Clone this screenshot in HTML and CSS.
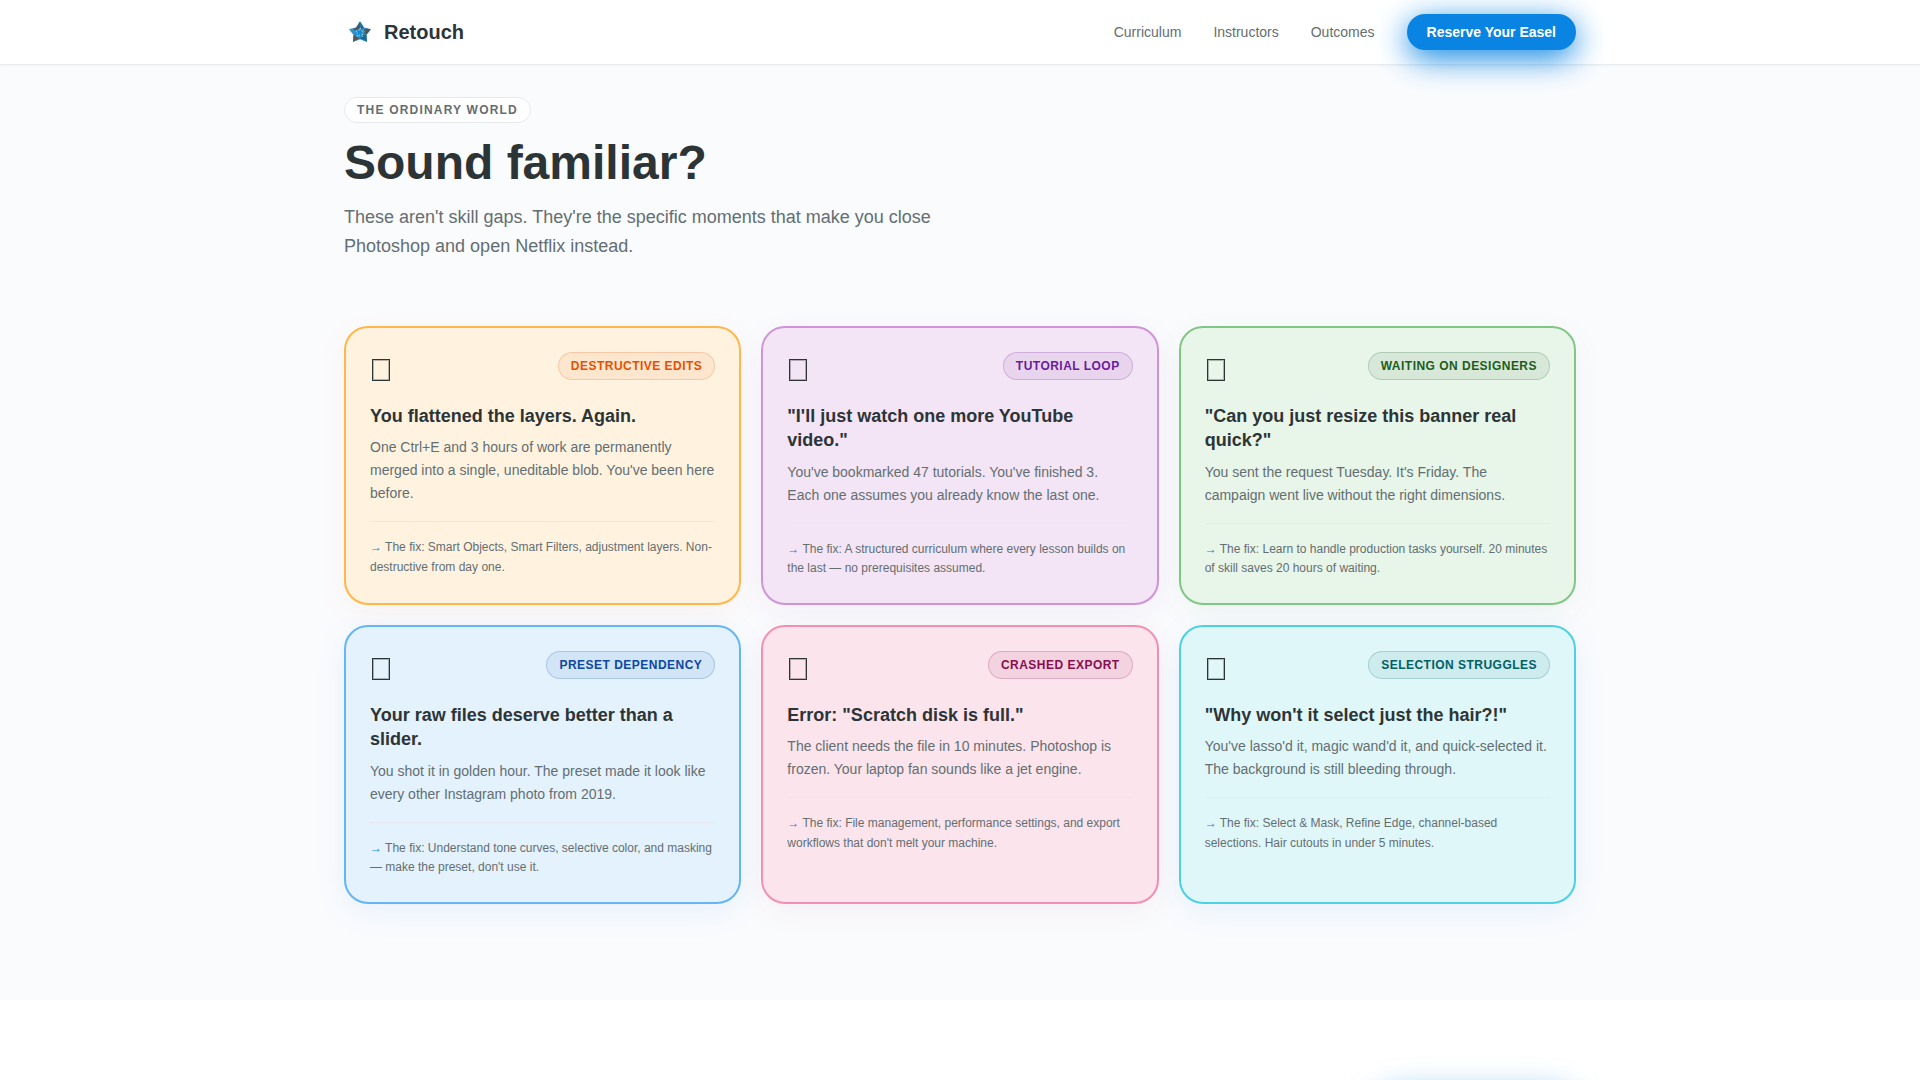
FILE: index.html
```html
<!DOCTYPE html>
<html lang="en">
<head>
<meta charset="UTF-8"><meta name="viewport" content="width=device-width,initial-scale=1">
<title>Retouch</title>
<link rel="stylesheet" href="styles.css">
</head>
<body>
<nav class="nav">
  <div class="container nav-inner">
    <a class="logo" href="#">
      <svg width="32" height="32" viewBox="0 0 32 32">
        <path fill="#2e90c4" stroke="#2e90c4" stroke-width=".6" d="M16 5.800l3.900 6 6.700 1.600-4.300 5.300.4 6.800-6.700-2.400-6.700 2.400.4-6.800-4.300-5.300 6.700-1.600z"/>
        <path fill="#50585e" d="M16 5.500l-3.900 6.300-3 .8 4.400 4.400 2.700-4zM26.600 13.400l-4.300 5.300-3.400-3 3-3.400zM9.100 25.700l.6-7 5.800 3.900z"/>
        <path fill="#1c6a9c" d="M22.900 25.700L16 22.300l3-3.300 3.200-.4zM16 5.500l3.900 6.300-2.900 2z"/>
        <circle cx="16" cy="16.500" r="4" fill="#168bd2"/>
        <path fill="none" stroke="#a8dcf0" stroke-width="1" stroke-dasharray="1.500 1.800" d="M16 12l1.400 2.900 3.200.3-2.400 2.200.7 3.200-2.900-1.700-2.900 1.700.7-3.200-2.400-2.200 3.200-.3z"/>
      </svg>
      Retouch
    </a>
    <div class="nav-links">
      <a href="#curriculum">Curriculum</a>
      <a href="#instructors">Instructors</a>
      <a href="#outcomes">Outcomes</a>
      <a class="btn" href="#reserve">Reserve Your Easel</a>
    </div>
  </div>
</nav>

<section class="problems">
  <div class="container">
    <span class="eyebrow">The Ordinary World</span>
    <h2>Sound familiar?</h2>
    <p class="lead">These aren't skill gaps. They're the specific moments that make you close Photoshop and open Netflix instead.</p>

    <div class="grid">
      <article class="card orange">
        <div class="card-top"><span class="icon"></span><span class="tag">Destructive Edits</span></div>
        <h3>You flattened the layers. Again.</h3>
        <p class="desc">One Ctrl+E and 3 hours of work are permanently merged into a single, uneditable blob. You've been here before.</p>
        <p class="fix"><span>→</span> The fix: Smart Objects, Smart Filters, adjustment layers. Non-destructive from day one.</p>
      </article>
      <article class="card purple">
        <div class="card-top"><span class="icon"></span><span class="tag">Tutorial Loop</span></div>
        <h3>"I'll just watch one more YouTube video."</h3>
        <p class="desc">You've bookmarked 47 tutorials. You've finished 3. Each one assumes you already know the last one.</p>
        <p class="fix"><span>→</span> The fix: A structured curriculum where every lesson builds on the last — no prerequisites assumed.</p>
      </article>
      <article class="card green">
        <div class="card-top"><span class="icon"></span><span class="tag">Waiting on Designers</span></div>
        <h3>"Can you just resize this banner real quick?"</h3>
        <p class="desc">You sent the request Tuesday. It's Friday. The campaign went live without the right dimensions.</p>
        <p class="fix"><span>→</span> The fix: Learn to handle production tasks yourself. 20 minutes of skill saves 20 hours of waiting.</p>
      </article>
      <article class="card blue">
        <div class="card-top"><span class="icon"></span><span class="tag">Preset Dependency</span></div>
        <h3>Your raw files deserve better than a slider.</h3>
        <p class="desc">You shot it in golden hour. The preset made it look like every other Instagram photo from 2019.</p>
        <p class="fix"><span>→</span> The fix: Understand tone curves, selective color, and masking — make the preset, don't use it.</p>
      </article>
      <article class="card pink">
        <div class="card-top"><span class="icon"></span><span class="tag">Crashed Export</span></div>
        <h3>Error: "Scratch disk is full."</h3>
        <p class="desc">The client needs the file in 10 minutes. Photoshop is frozen. Your laptop fan sounds like a jet engine.</p>
        <p class="fix"><span>→</span> The fix: File management, performance settings, and export workflows that don't melt your machine.</p>
      </article>
      <article class="card cyan">
        <div class="card-top"><span class="icon"></span><span class="tag">Selection Struggles</span></div>
        <h3>"Why won't it select just the hair?!"</h3>
        <p class="desc">You've lasso'd it, magic wand'd it, and quick-selected it. The background is still bleeding through.</p>
        <p class="fix"><span>→</span> The fix: Select &amp; Mask, Refine Edge, channel-based selections. Hair cutouts in under 5 minutes.</p>
      </article>
    </div>
  </div>
</section>

<section class="next">
  <div class="container next-inner"><div class="next-card"></div></div>
</section>
</body>
</html>
```

FILE: styles.css
```css
:root{--ink:#2d3436;--muted:#636e72;--accent:#0984e3;--line:#e6eaee;--bg:#fafbfd}
*{box-sizing:border-box;margin:0;padding:0}
body{height:1080px;overflow:hidden;font-family:"Liberation Sans",Arial,sans-serif;color:var(--ink);background:#fff}
a{color:inherit;text-decoration:none}
.container{max-width:1280px;margin:0 auto;padding:0 24px}

.nav{position:relative;z-index:1;background:#fff;border-bottom:1px solid #e9ecef;box-shadow:0 1px 3px #0000000a}
.nav-inner{display:flex;justify-content:space-between;align-items:center;height:64px}
.logo{display:flex;align-items:center;gap:8px;font-size:20px;font-weight:700}
.nav-links{display:flex;align-items:center;gap:32px;font-size:14px;color:var(--muted)}
.btn{height:36px;padding:0 20px;border-radius:18px;background:var(--accent);color:#fff;font-weight:700;line-height:36px;box-shadow:0 8px 32px #0984e3}

.problems{background:var(--bg);padding:32px 0 96.3px}
.eyebrow{display:block;width:fit-content;padding:0 12px;border:1px solid var(--line);border-radius:13px;background:#fff;color:var(--muted);font-size:12px;font-weight:700;line-height:24px;letter-spacing:1.2px;text-transform:uppercase}
h2{margin:13px 0 14px;font-size:48px;line-height:53px}
.lead{max-width:600px;color:var(--muted);font-size:18px;line-height:28.8px}
.grid{display:grid;grid-template-columns:repeat(3,1fr);gap:20px;margin-top:65.15px}

.card{padding:24px 24px 24.6px;border:2px solid var(--edge);border-radius:24px;background:var(--fill);box-shadow:0 8px 32px var(--glow)}
.card-top{display:flex;justify-content:space-between;align-items:flex-start;margin-bottom:16px}
.icon{width:18px;height:22px;margin:7px 0 7px 2px;border:1px solid var(--ink);outline:1px solid #2d343655;outline-offset:-2px}
.tag{padding:0 12px;border:1px solid color-mix(in srgb,var(--text) 20%,transparent);border-radius:14px;background:color-mix(in srgb,var(--text) 8%,transparent);color:var(--text);font-size:12px;font-weight:700;line-height:26px;letter-spacing:.48px;text-transform:uppercase}
h3{margin-bottom:8px;font-size:18px;line-height:24.4px}
.desc{color:var(--muted);font-size:14px;line-height:23.1px}
.fix{margin-top:16px;padding-top:16px;border-top:1px solid var(--line);color:var(--muted);font-size:12px;line-height:19.2px}
.fix span{color:var(--accent)}

.orange{--fill:#fff3e0;--edge:#ffb74d;--text:#e65100;--glow:#e651000d}
.purple{--fill:#f3e5f5;--edge:#ce93d8;--text:#6a1b9a;--glow:#6a1b9a0d}
.green{--fill:#e8f5e9;--edge:#81c784;--text:#1b5e20;--glow:#1b5e200d}
.blue{--fill:#e3f2fd;--edge:#64b5f6;--text:#0d47a1;--glow:#0984e314}
.pink{--fill:#fce4ec;--edge:#f48fb1;--text:#880e4f;--glow:#880e4f0d}
.cyan{--fill:#e0f7fa;--edge:#4dd0e1;--text:#006064;--glow:#0984e314}

.next{padding-top:87px}
.next-inner{display:flex;justify-content:flex-end}
.next-card{width:200px;height:60px;border-radius:24px;background:#fff;box-shadow:0 8px 32px #0984e3aa}
```
